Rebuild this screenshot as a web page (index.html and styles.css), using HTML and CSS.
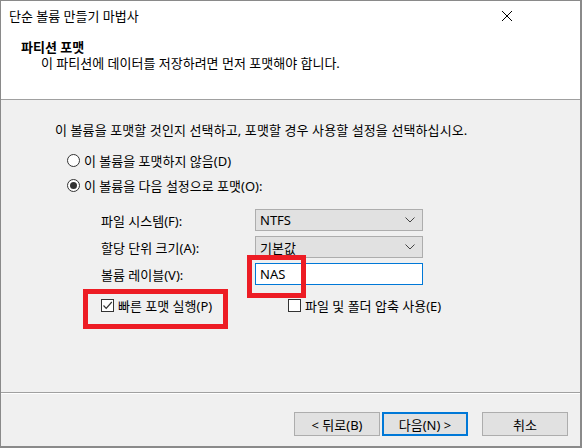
FILE: index.html
```html
<!DOCTYPE html>
<html lang="ko">
<head>
  <meta charset="UTF-8">
  <title>단순 볼륨 만들기 마법사</title>
  <link rel="stylesheet" href="styles.css">
</head>
<body>
  <div class="window">
    <div class="header">
      <div class="titlebar">
        <span class="title">단순 볼륨 만들기 마법사</span>
        <svg class="close" width="12" height="12" viewBox="0 0 12 12">
          <path d="M1 1 L11 11 M11 1 L1 11" stroke="#000" stroke-width="1" fill="none"/>
        </svg>
      </div>
      <div class="heading">파티션 포맷</div>
      <div class="subheading">이 파티션에 데이터를 저장하려면 먼저 포맷해야 합니다.</div>
    </div>

    <div class="content">
      <div class="instr">이 볼륨을 포맷할 것인지 선택하고, 포맷할 경우 사용할 설정을 선택하십시오.</div>

      <div class="option first">
        <span class="radio"></span>
        <span>이 볼륨을 포맷하지 않음(D)</span>
      </div>
      <div class="option second">
        <span class="radio checked"></span>
        <span>이 볼륨을 다음 설정으로 포맷(O):</span>
      </div>

      <div class="fields">
        <div class="field-label">파일 시스템(F):</div>
        <div class="select">
          <span>NTFS</span>
          <svg width="10" height="6" viewBox="0 0 10 6"><path d="M0.5 0.5 L5 5 L9.5 0.5" stroke="#444" fill="none"/></svg>
        </div>
        <div class="field-label">할당 단위 크기(A):</div>
        <div class="select">
          <span>기본값</span>
          <svg width="10" height="6" viewBox="0 0 10 6"><path d="M0.5 0.5 L5 5 L9.5 0.5" stroke="#444" fill="none"/></svg>
        </div>
        <div class="field-label">볼륨 레이블(V):</div>
        <div class="textbox">NAS</div>
      </div>

      <div class="checks">
        <div class="check first">
          <span class="box">
            <svg width="11" height="11" viewBox="0 0 11 11"><path d="M1.5 5.5 L4.2 8.3 L9.8 2" stroke="#333" stroke-width="1.2" fill="none"/></svg>
          </span>
          <span>빠른 포맷 실행(P)</span>
        </div>
        <div class="check">
          <span class="box"></span>
          <span>파일 및 폴더 압축 사용(E)</span>
        </div>
      </div>

      <div class="mark mark-label"></div>
      <div class="mark mark-quick"></div>
    </div>

    <div class="footer">
      <button class="btn">&lt; 뒤로(B)</button>
      <button class="btn default">다음(N) &gt;</button>
      <button class="btn cancel">취소</button>
    </div>
  </div>
</body>
</html>
```

FILE: styles.css
```css
* {
  box-sizing: border-box;
}
body {
  margin: 0;
  font-family: "Noto Sans", "Noto Sans CJK KR", sans-serif;
  font-size: 13px;
  color: #000;
  background: #fff;
}
.window {
  width: 582px;
  height: 448px;
  border: 1px solid #8a8a8a;
  border-right-width: 2px;
  border-bottom-width: 2px;
  display: flex;
  flex-direction: column;
  background: #f0f0f0;
}
.header {
  background: #fff;
  height: 99px;
  border-bottom: 1px solid #a0a0a0;
}
.titlebar {
  height: 29px;
  display: flex;
  align-items: center;
  justify-content: space-between;
  padding: 0 67px 0 8px;
}
.heading {
  margin-top: 9px;
  padding-left: 20px;
  font-weight: bold;
  line-height: 16px;
}
.subheading {
  padding-left: 40px;
  line-height: 16px;
}
.content {
  position: relative;
  flex: 1;
  padding-left: 54px;
  border-bottom: 1px solid #a0a0a0;
  box-shadow: 0 1px 0 #fff;
}
.instr {
  margin-top: 22px;
  line-height: 16px;
  letter-spacing: 0.1px;
}
.option {
  display: flex;
  align-items: center;
  height: 17px;
  padding-left: 12px;
}
.option.first {
  margin-top: 14px;
}
.option.second {
  margin-top: 8px;
}
.radio {
  width: 13px;
  height: 13px;
  border: 1px solid #333;
  border-radius: 50%;
  background: #fff;
  margin-right: 4px;
  position: relative;
}
.radio.checked::after {
  content: "";
  position: absolute;
  left: 2px;
  top: 2px;
  width: 7px;
  height: 7px;
  border-radius: 50%;
  background: #333;
}
.fields {
  display: grid;
  grid-template-columns: 154px 168px;
  row-gap: 5px;
  margin-top: 15px;
  padding-left: 46px;
}
.field-label {
  display: flex;
  align-items: center;
  height: 22px;
}
.select {
  height: 22px;
  background: #e1e1e1;
  border: 1px solid #adadad;
  display: flex;
  align-items: center;
  justify-content: space-between;
  padding: 0 7px 0 4px;
}
.textbox {
  height: 22px;
  background: #fff;
  border: 1px solid #0078d7;
  display: flex;
  align-items: center;
  padding-left: 4px;
}
.checks {
  display: flex;
  margin-top: 12px;
  padding-left: 46px;
  height: 17px;
}
.check {
  display: flex;
  align-items: center;
}
.check.first {
  width: 187px;
}
.box {
  width: 13px;
  height: 13px;
  border: 1px solid #333;
  background: #fff;
  margin-right: 4px;
  display: flex;
  align-items: center;
  justify-content: center;
}
.mark {
  position: absolute;
  border: 5px solid #ed1c24;
}
.mark-label {
  left: 246px;
  top: 155px;
  width: 59px;
  height: 43px;
}
.mark-quick {
  left: 82px;
  top: 189px;
  width: 145px;
  height: 40px;
}
.footer {
  height: 53px;
  display: flex;
  justify-content: flex-end;
  align-items: flex-start;
  padding: 19px 12px 0 0;
}
.btn {
  width: 86px;
  height: 24px;
  background: #e1e1e1;
  border: 1px solid #adadad;
  font-family: inherit;
  font-size: 13px;
  color: #000;
  padding: 0;
  margin: 0;
}
.btn.default {
  border: 2px solid #0078d7;
  margin-left: 2px;
}
.btn.cancel {
  margin-left: 14px;
}
```
